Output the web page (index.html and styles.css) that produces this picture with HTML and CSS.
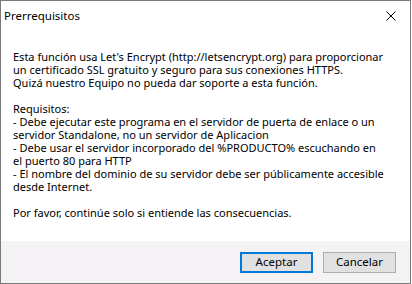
FILE: index.html
```html
<!DOCTYPE html>
<html lang="es">
<head>
<meta charset="utf-8">
<title>Prerrequisitos</title>
<link rel="stylesheet" href="styles.css">
</head>
<body>
<div class="window">
  <div class="titlebar">
    <span class="title">Prerrequisitos</span>
    <button class="close" aria-label="Cerrar">
      <svg width="10" height="10" viewBox="0 0 10 10"><path d="M0.5 0.5 L9.5 9.5 M9.5 0.5 L0.5 9.5" stroke="#000" stroke-width="1" fill="none"/></svg>
    </button>
  </div>
  <div class="content">
    <p class="message">Esta función usa Let's Encrypt (http://letsencrypt.org) para proporcionar<br>un certificado SSL gratuito y seguro para sus conexiones HTTPS.<br>Quizá nuestro Equipo no pueda dar soporte a esta función.<br><br>Requisitos:<br>- Debe ejecutar este programa en el servidor de puerta de enlace o un<br>servidor Standalone, no un servidor de Aplicacion<br>- Debe usar el servidor incorporado del %PRODUCTO% escuchando en<br>el puerto 80 para HTTP<br>- El nombre del dominio de su servidor debe ser públicamente accesible<br>desde Internet.<br><br>Por favor, continúe solo si entiende las consecuencias.</p>
  </div>
  <div class="footer">
    <button class="btn primary">Aceptar</button>
    <button class="btn">Cancelar</button>
  </div>
</div>
</body>
</html>
```
FILE: styles.css
```css
html, body {
  margin: 0;
  padding: 0;
  background: #ffffff;
}
body {
  font-family: "Noto Sans", "Open Sans", sans-serif;
  font-size: 11px;
  color: #000;
}
.window {
  box-sizing: border-box;
  width: 411px;
  height: 284px;
  border: 1px solid #7a7a7a;
  background: #ffffff;
  display: flex;
  flex-direction: column;
}
.titlebar {
  height: 29px;
  display: flex;
  align-items: center;
  justify-content: space-between;
  padding-left: 3px;
}
.title {
  font-size: 11.5px;
  line-height: 16px;
  padding-top: 1px;
}
.close {
  width: 30px;
  height: 29px;
  margin-right: 4px;
  border: 0;
  background: transparent;
  padding: 0;
  display: flex;
  align-items: center;
  justify-content: center;
}
.close svg {
  display: block;
}
.content {
  flex: 1;
  padding: 20px 0 0 12px;
}
.message {
  margin: 0;
  font-size: 11px;
  line-height: 13px;
  white-space: nowrap;
}
.footer {
  height: 42px;
  background: #f4f2f4;
  display: flex;
  align-items: center;
  justify-content: flex-end;
  gap: 10px;
  padding-right: 14px;
}
.btn {
  box-sizing: border-box;
  width: 73px;
  height: 21px;
  padding: 0;
  font-family: inherit;
  font-size: 11.5px;
  line-height: 16px;
  color: #000;
  background: #e1e1e1;
  border: 1px solid #adadad;
}
.btn.primary {
  border: 2px solid #0078d7;
}
```
